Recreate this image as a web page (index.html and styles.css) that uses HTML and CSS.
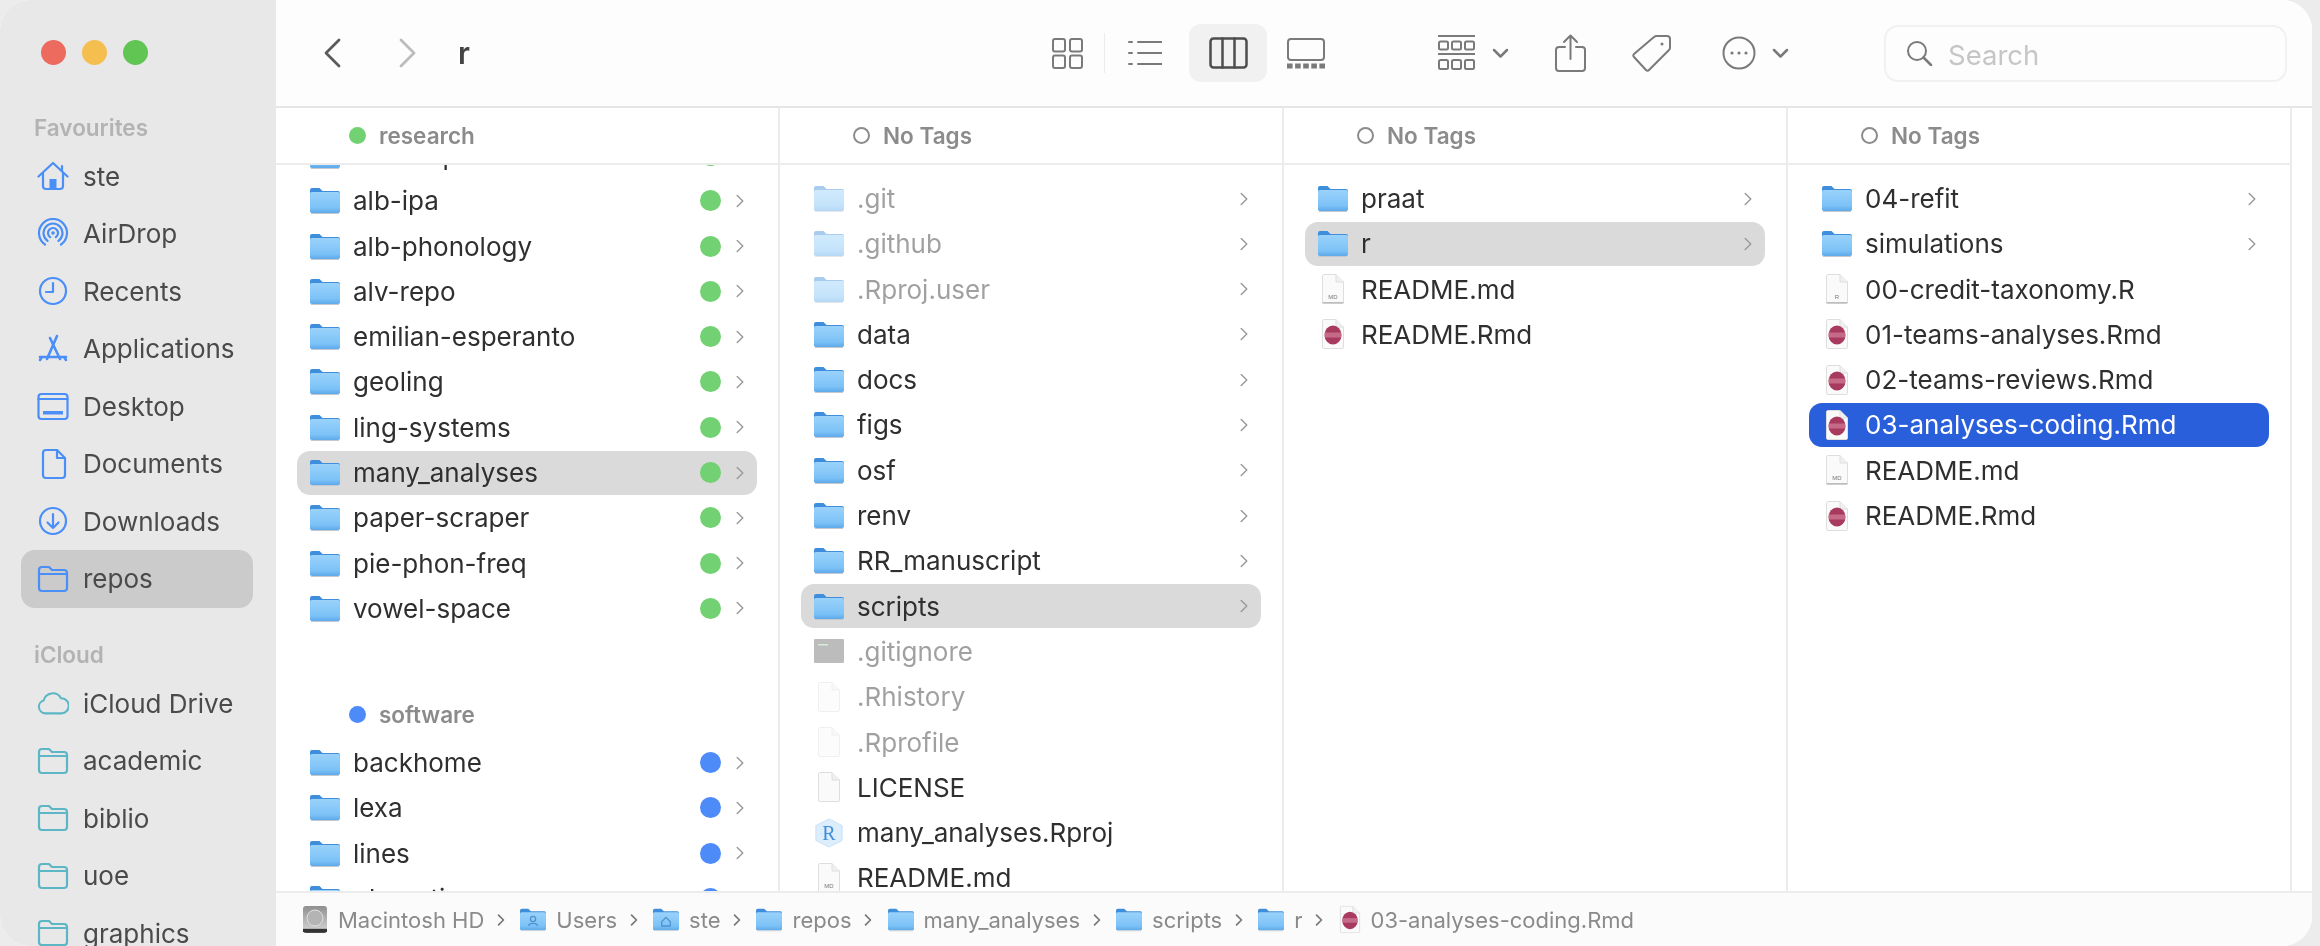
FILE: index.html
```html
<!DOCTYPE html>
<html lang="en">
<head>
    <meta charset="UTF-8">
    <meta name="viewport" content="width=device-width, initial-scale=1.0">
    <title>r</title>
    <link rel="stylesheet" href="styles.css">
</head>
<body>
    <svg class="sprite" aria-hidden="true">
        <defs>
            <linearGradient id="folderBody" x1="0" y1="0" x2="0" y2="1">
                <stop offset="0" stop-color="#9ad2fa"/>
                <stop offset="0.75" stop-color="#7cc2f7"/>
                <stop offset="1" stop-color="#5ea9ea"/>
            </linearGradient>
            <linearGradient id="diskBody" x1="0" y1="0" x2="0" y2="1">
                <stop offset="0" stop-color="#8f8f8f"/>
                <stop offset="0.8" stop-color="#c9c9c9"/>
                <stop offset="1" stop-color="#3d3d3d"/>
            </linearGradient>
        </defs>

        <symbol id="folder" viewBox="0 0 30 27">
            <path d="M0 3a2 2 0 0 1 2-2h7.500l3 3H28a2 2 0 0 1 2 2v6H0Z" fill="#3f8edb"/>
            <rect x="0" y="5" width="30" height="21" rx="1.800" fill="url(#folderBody)"/>
            <rect x="1" y="26" width="28" height="1" fill="#c4c9cf"/>
        </symbol>
        <symbol id="file" viewBox="0 0 24 30">
            <path d="M2.500 .5H15l7.500 7.500V28a1.500 1.500 0 0 1-1.500 1.500H3A1.500 1.500 0 0 1 1.500 28V2A1.500 1.500 0 0 1 2.500 .5Z" fill="#fafafa" stroke="#dedede"/>
            <path d="M15 .5V8h7.500" fill="#f0f0f0" stroke="#dedede"/>
        </symbol>
        <symbol id="file-doc" viewBox="0 0 24 30">
            <use href="#file"/>
            <rect x="1.500" y="28" width="21" height="1.500" fill="#bdbdbd"/>
        </symbol>
        <symbol id="file-rmd" viewBox="0 0 24 30">
            <use href="#file"/>
            <ellipse cx="12" cy="16" rx="8.500" ry="9.500" fill="#a93a5f"/>
            <rect x="3.500" y="13.500" width="17" height="5" fill="#d88aa2" opacity="0.6"/>
        </symbol>
        <symbol id="file-exec" viewBox="0 0 30 24">
            <rect width="30" height="24" rx="1" fill="#6d6d6d"/>
            <rect x="4" y="5" width="10" height="1.500" fill="#9fd69f"/>
        </symbol>
        <symbol id="file-rproj" viewBox="0 0 32 32">
            <path d="M16 1 30 8v16l-14 7-14-7V8Z" fill="#dcedfb" stroke="#c7e0f5"/>
        </symbol>
        <symbol id="disk" viewBox="0 0 26 27">
            <rect x="1" y="0" width="24" height="27" rx="3" fill="url(#diskBody)"/>
            <circle cx="13" cy="12" r="8" fill="#b4b4b4" stroke="#dedede"/>
            <rect x="1" y="23" width="24" height="3" fill="#333"/>
        </symbol>
        <symbol id="folder-user" viewBox="0 0 30 27">
            <use href="#folder"/>
            <circle cx="15" cy="13" r="3" fill="none" stroke="#4f93cf" stroke-width="1.500"/>
            <path d="M10 21c0-4 10-4 10 0" fill="none" stroke="#4f93cf" stroke-width="1.500"/>
        </symbol>
        <symbol id="folder-home" viewBox="0 0 30 27">
            <use href="#folder"/>
            <path d="M10 16l5-5 5 5v5h-10Z" fill="none" stroke="#4f93cf" stroke-width="1.500"/>
        </symbol>

        <symbol id="side-home" viewBox="0 0 32 32">
            <path d="M1.500 16.500 16 3l14.500 13.500M25 6v5M6 13v13a3 3 0 0 0 3 3h14a3 3 0 0 0 3-3V13"/>
            <rect x="12.500" y="19" width="7" height="10" class="solid"/>
        </symbol>
        <symbol id="side-airdrop" viewBox="0 0 32 32">
            <circle cx="16" cy="15" r="1.800" class="solid"/>
            <path d="M13.130 19.100A5 5 0 1 1 18.870 19.100M10.550 22.780A9.500 9.500 0 1 1 21.450 22.780M8 26.500A14 14 0 1 1 24 26.500"/>
        </symbol>
        <symbol id="side-clock" viewBox="0 0 32 32">
            <circle cx="16" cy="16" r="13"/>
            <path d="M16 8v9H9"/>
        </symbol>
        <symbol id="side-apps" viewBox="0 0 32 32">
            <path d="M20 3 10 26M13 5l10 21M3 24h26M5 24l-2 3M27 24l2 3" stroke-width="2.600"/>
        </symbol>
        <symbol id="side-desktop" viewBox="0 0 32 32">
            <rect x="1.500" y="4" width="29" height="25" rx="3"/>
            <path d="M1.500 9h29"/>
            <rect x="6" y="21" width="20" height="3.500" class="solid"/>
        </symbol>
        <symbol id="side-doc" viewBox="0 0 32 32">
            <path d="M9 2h11l8 8v17a3 3 0 0 1-3 3H9a3 3 0 0 1-3-3V5a3 3 0 0 1 3-3Z"/>
            <path d="M20 2v8h8"/>
        </symbol>
        <symbol id="side-down" viewBox="0 0 32 32">
            <circle cx="16" cy="16" r="13"/>
            <path d="M16 9v14M10.500 17.500 16 23l5.500-5.500"/>
        </symbol>
        <symbol id="side-folder" viewBox="0 0 32 32">
            <path d="M2 7a3 3 0 0 1 3-3h7l3 3h12a3 3 0 0 1 3 3v15a3 3 0 0 1-3 3H5a3 3 0 0 1-3-3Z"/>
            <path d="M2 11h28"/>
        </symbol>
        <symbol id="side-cloud" viewBox="0 0 34 32">
            <path d="M9 27a7 7 0 0 1-2-13.700A10 10 0 0 1 25.500 11 8 8 0 0 1 26 27Z"/>
        </symbol>
        <symbol id="chev" viewBox="0 0 12 20">
            <path d="M2.500 3 9.500 10l-7 7"/>
        </symbol>
    </svg>

    <div class="window">
        <aside class="sidebar">
            <div class="lights">
                <span class="light light-red"></span>
                <span class="light light-yellow"></span>
                <span class="light light-green"></span>
            </div>

            <div class="side-label side-label-first">Favourites</div>
            <div class="side-row"><svg class="side-icon"><use href="#side-home"/></svg>ste</div>
            <div class="side-row"><svg class="side-icon"><use href="#side-airdrop"/></svg>AirDrop</div>
            <div class="side-row"><svg class="side-icon"><use href="#side-clock"/></svg>Recents</div>
            <div class="side-row"><svg class="side-icon"><use href="#side-apps"/></svg>Applications</div>
            <div class="side-row"><svg class="side-icon"><use href="#side-desktop"/></svg>Desktop</div>
            <div class="side-row"><svg class="side-icon"><use href="#side-doc"/></svg>Documents</div>
            <div class="side-row"><svg class="side-icon"><use href="#side-down"/></svg>Downloads</div>
            <div class="side-row side-row-active"><svg class="side-icon"><use href="#side-folder"/></svg>repos</div>

            <div class="side-label">iCloud</div>
            <div class="side-row side-teal"><svg class="side-icon"><use href="#side-cloud"/></svg>iCloud Drive</div>
            <div class="side-row side-teal"><svg class="side-icon"><use href="#side-folder"/></svg>academic</div>
            <div class="side-row side-teal"><svg class="side-icon"><use href="#side-folder"/></svg>biblio</div>
            <div class="side-row side-teal"><svg class="side-icon"><use href="#side-folder"/></svg>uoe</div>
            <div class="side-row side-teal"><svg class="side-icon"><use href="#side-folder"/></svg>graphics</div>
        </aside>

        <main class="main">
            <header class="toolbar">
                <div class="tb-left">
                    <svg class="tb-back" viewBox="0 0 19 30"><path d="M16 2 3 15l13 13"/></svg>
                    <svg class="tb-forward" viewBox="0 0 17 30"><path d="M2 2l13 13L2 28"/></svg>
                    <span class="tb-title">r</span>
                </div>

                <div class="tb-btn tb-btn-icons">
                    <svg class="tb-icon" width="31" height="31" viewBox="0 0 31 31">
                        <rect x="1" y="1" width="12" height="12.500" rx="2"/><rect x="18" y="1" width="12" height="12.500" rx="2"/>
                        <rect x="1" y="17.500" width="12" height="12.500" rx="2"/><rect x="18" y="17.500" width="12" height="12.500" rx="2"/>
                    </svg>
                </div>
                <div class="tb-btn tb-btn-list">
                    <svg class="tb-icon" width="34" height="28" viewBox="0 0 34 28">
                        <path d="M10 3h24M10 14h24M10 25h24"/>
                        <path d="M1 3h3M1 14h3M1 25h3"/>
                    </svg>
                </div>
                <div class="tb-btn tb-btn-active">
                    <svg class="tb-icon tb-icon-dark" width="39" height="32" viewBox="0 0 39 32">
                        <rect x="1.500" y="1.500" width="36" height="29" rx="3"/>
                        <path d="M13.500 1.500v29M25.500 1.500v29"/>
                    </svg>
                </div>
                <div class="tb-btn">
                    <svg class="tb-icon" width="38" height="31" viewBox="0 0 38 31">
                        <rect x="1" y="1" width="36" height="21" rx="3"/>
                        <path d="M0 28h38" stroke-width="5" stroke-dasharray="5.600 2.500" stroke-linecap="butt"/>
                    </svg>
                </div>

                <svg class="tb-icon tb-group" width="37" height="36" viewBox="0 0 37 36">
                    <path d="M0 1h37M0 19h37"/>
                    <rect x="1" y="6.500" width="9" height="8" rx="1.500"/><rect x="14" y="6.500" width="9" height="8" rx="1.500"/><rect x="27" y="6.500" width="9" height="8" rx="1.500"/>
                    <rect x="1" y="25" width="9" height="9" rx="1.500"/><rect x="14" y="25" width="9" height="9" rx="1.500"/><rect x="27" y="25" width="9" height="9" rx="1.500"/>
                </svg>
                <svg class="tb-icon tb-caret" width="17" height="11" viewBox="0 0 17 11"><path d="M2 2l6.500 6.500L15 2" stroke-width="2.500"/></svg>
                <svg class="tb-icon tb-share" width="31" height="38" viewBox="0 0 31 38">
                    <path d="M10 13H4a3 3 0 0 0-3 3v18a3 3 0 0 0 3 3h23a3 3 0 0 0 3-3V16a3 3 0 0 0-3-3h-6"/>
                    <path d="M15.500 25V2M9 8l6.500-6.500L22 8"/>
                </svg>
                <svg class="tb-icon tb-tag" width="40" height="38" viewBox="0 0 40 38">
                    <path d="M25 2h10a3 3 0 0 1 3 3v9a3 3 0 0 1-1 2L17 36a2 2 0 0 1-3 0L2 23a2 2 0 0 1 0-3L22 3a4 4 0 0 1 3-1Z"/>
                    <circle cx="30" cy="10" r="1.500" class="solid"/>
                </svg>
                <svg class="tb-icon tb-more" width="34" height="34" viewBox="0 0 34 34">
                    <circle cx="17" cy="17" r="15.500"/>
                    <circle cx="10" cy="17" r="1.600" class="solid"/><circle cx="17" cy="17" r="1.600" class="solid"/><circle cx="24" cy="17" r="1.600" class="solid"/>
                </svg>
                <svg class="tb-icon tb-caret tb-caret-more" width="17" height="11" viewBox="0 0 17 11"><path d="M2 2l6.500 6.500L15 2" stroke-width="2.500"/></svg>

                <div class="search">
                    <svg class="tb-icon" width="27" height="26" viewBox="0 0 27 26">
                        <circle cx="11" cy="11" r="9"/>
                        <path d="M17.500 17.500 25 25" stroke-width="2.500"/>
                    </svg>
                    <span class="search-text">Search</span>
                </div>
            </header>

            <div class="columns">
                <section class="column">
                    <div class="col-head"><span class="tag-dot tag-green"></span><span class="col-name">research</span></div>
                    <div class="col-list col-list-scrolled">
                        <div class="row"><svg class="ico"><use href="#folder"/></svg><span class="name">alb-corpus</span><span class="dot dot-green"></span><svg class="chev"><use href="#chev"/></svg></div>
                        <div class="row"><svg class="ico"><use href="#folder"/></svg><span class="name">alb-ipa</span><span class="dot dot-green"></span><svg class="chev"><use href="#chev"/></svg></div>
                        <div class="row"><svg class="ico"><use href="#folder"/></svg><span class="name">alb-phonology</span><span class="dot dot-green"></span><svg class="chev"><use href="#chev"/></svg></div>
                        <div class="row"><svg class="ico"><use href="#folder"/></svg><span class="name">alv-repo</span><span class="dot dot-green"></span><svg class="chev"><use href="#chev"/></svg></div>
                        <div class="row"><svg class="ico"><use href="#folder"/></svg><span class="name">emilian-esperanto</span><span class="dot dot-green"></span><svg class="chev"><use href="#chev"/></svg></div>
                        <div class="row"><svg class="ico"><use href="#folder"/></svg><span class="name">geoling</span><span class="dot dot-green"></span><svg class="chev"><use href="#chev"/></svg></div>
                        <div class="row"><svg class="ico"><use href="#folder"/></svg><span class="name">ling-systems</span><span class="dot dot-green"></span><svg class="chev"><use href="#chev"/></svg></div>
                        <div class="row row-open"><svg class="ico"><use href="#folder"/></svg><span class="name">many_analyses</span><span class="dot dot-green"></span><svg class="chev"><use href="#chev"/></svg></div>
                        <div class="row"><svg class="ico"><use href="#folder"/></svg><span class="name">paper-scraper</span><span class="dot dot-green"></span><svg class="chev"><use href="#chev"/></svg></div>
                        <div class="row"><svg class="ico"><use href="#folder"/></svg><span class="name">pie-phon-freq</span><span class="dot dot-green"></span><svg class="chev"><use href="#chev"/></svg></div>
                        <div class="row"><svg class="ico"><use href="#folder"/></svg><span class="name">vowel-space</span><span class="dot dot-green"></span><svg class="chev"><use href="#chev"/></svg></div>

                        <div class="group-head"><span class="tag-dot tag-blue"></span><span class="col-name">software</span></div>
                        <div class="row"><svg class="ico"><use href="#folder"/></svg><span class="name">backhome</span><span class="dot dot-blue"></span><svg class="chev"><use href="#chev"/></svg></div>
                        <div class="row"><svg class="ico"><use href="#folder"/></svg><span class="name">lexa</span><span class="dot dot-blue"></span><svg class="chev"><use href="#chev"/></svg></div>
                        <div class="row"><svg class="ico"><use href="#folder"/></svg><span class="name">lines</span><span class="dot dot-blue"></span><svg class="chev"><use href="#chev"/></svg></div>
                        <div class="row"><svg class="ico"><use href="#folder"/></svg><span class="name">phonetics</span><span class="dot dot-blue"></span><svg class="chev"><use href="#chev"/></svg></div>
                    </div>
                </section>

                <section class="column">
                    <div class="col-head"><span class="tag-ring"></span><span class="col-name">No Tags</span></div>
                    <div class="col-list">
                        <div class="row row-hidden"><svg class="ico"><use href="#folder"/></svg><span class="name">.git</span><svg class="chev"><use href="#chev"/></svg></div>
                        <div class="row row-hidden"><svg class="ico"><use href="#folder"/></svg><span class="name">.github</span><svg class="chev"><use href="#chev"/></svg></div>
                        <div class="row row-hidden"><svg class="ico"><use href="#folder"/></svg><span class="name">.Rproj.user</span><svg class="chev"><use href="#chev"/></svg></div>
                        <div class="row"><svg class="ico"><use href="#folder"/></svg><span class="name">data</span><svg class="chev"><use href="#chev"/></svg></div>
                        <div class="row"><svg class="ico"><use href="#folder"/></svg><span class="name">docs</span><svg class="chev"><use href="#chev"/></svg></div>
                        <div class="row"><svg class="ico"><use href="#folder"/></svg><span class="name">figs</span><svg class="chev"><use href="#chev"/></svg></div>
                        <div class="row"><svg class="ico"><use href="#folder"/></svg><span class="name">osf</span><svg class="chev"><use href="#chev"/></svg></div>
                        <div class="row"><svg class="ico"><use href="#folder"/></svg><span class="name">renv</span><svg class="chev"><use href="#chev"/></svg></div>
                        <div class="row"><svg class="ico"><use href="#folder"/></svg><span class="name">RR_manuscript</span><svg class="chev"><use href="#chev"/></svg></div>
                        <div class="row row-open"><svg class="ico"><use href="#folder"/></svg><span class="name">scripts</span><svg class="chev"><use href="#chev"/></svg></div>
                        <div class="row row-hidden"><svg class="ico ico-exec"><use href="#file-exec"/></svg><span class="name">.gitignore</span></div>
                        <div class="row row-hidden"><svg class="ico ico-file"><use href="#file"/></svg><span class="name">.Rhistory</span></div>
                        <div class="row row-hidden"><svg class="ico ico-file"><use href="#file"/></svg><span class="name">.Rprofile</span></div>
                        <div class="row"><svg class="ico ico-file"><use href="#file"/></svg><span class="name">LICENSE</span></div>
                        <div class="row"><span class="ico file-badge"><svg class="file-svg"><use href="#file-rproj"/></svg><b class="badge-r">R</b></span><span class="name">many_analyses.Rproj</span></div>
                        <div class="row"><span class="ico ico-file file-badge"><svg class="file-svg"><use href="#file-doc"/></svg><b class="badge-tiny">MD</b></span><span class="name">README.md</span></div>
                    </div>
                </section>

                <section class="column">
                    <div class="col-head"><span class="tag-ring"></span><span class="col-name">No Tags</span></div>
                    <div class="col-list">
                        <div class="row"><svg class="ico"><use href="#folder"/></svg><span class="name">praat</span><svg class="chev"><use href="#chev"/></svg></div>
                        <div class="row row-open"><svg class="ico"><use href="#folder"/></svg><span class="name">r</span><svg class="chev"><use href="#chev"/></svg></div>
                        <div class="row"><span class="ico ico-file file-badge"><svg class="file-svg"><use href="#file-doc"/></svg><b class="badge-tiny">MD</b></span><span class="name">README.md</span></div>
                        <div class="row"><svg class="ico ico-file"><use href="#file-rmd"/></svg><span class="name">README.Rmd</span></div>
                    </div>
                </section>

                <section class="column">
                    <div class="col-head"><span class="tag-ring"></span><span class="col-name">No Tags</span></div>
                    <div class="col-list">
                        <div class="row"><svg class="ico"><use href="#folder"/></svg><span class="name">04-refit</span><svg class="chev"><use href="#chev"/></svg></div>
                        <div class="row"><svg class="ico"><use href="#folder"/></svg><span class="name">simulations</span><svg class="chev"><use href="#chev"/></svg></div>
                        <div class="row"><span class="ico ico-file file-badge"><svg class="file-svg"><use href="#file-doc"/></svg><b class="badge-tiny">R</b></span><span class="name">00-credit-taxonomy.R</span></div>
                        <div class="row"><svg class="ico ico-file"><use href="#file-rmd"/></svg><span class="name">01-teams-analyses.Rmd</span></div>
                        <div class="row"><svg class="ico ico-file"><use href="#file-rmd"/></svg><span class="name">02-teams-reviews.Rmd</span></div>
                        <div class="row row-selected"><svg class="ico ico-file"><use href="#file-rmd"/></svg><span class="name">03-analyses-coding.Rmd</span></div>
                        <div class="row"><span class="ico ico-file file-badge"><svg class="file-svg"><use href="#file-doc"/></svg><b class="badge-tiny">MD</b></span><span class="name">README.md</span></div>
                        <div class="row"><svg class="ico ico-file"><use href="#file-rmd"/></svg><span class="name">README.Rmd</span></div>
                    </div>
                </section>

                <div class="column-rest"></div>
            </div>

            <footer class="pathbar">
                <div class="crumb"><svg class="crumb-icon"><use href="#disk"/></svg>Macintosh HD</div>
                <svg class="crumb-sep"><use href="#chev"/></svg>
                <div class="crumb"><svg class="crumb-icon"><use href="#folder-user"/></svg>Users</div>
                <svg class="crumb-sep"><use href="#chev"/></svg>
                <div class="crumb"><svg class="crumb-icon"><use href="#folder-home"/></svg>ste</div>
                <svg class="crumb-sep"><use href="#chev"/></svg>
                <div class="crumb"><svg class="crumb-icon"><use href="#folder"/></svg>repos</div>
                <svg class="crumb-sep"><use href="#chev"/></svg>
                <div class="crumb"><svg class="crumb-icon"><use href="#folder"/></svg>many_analyses</div>
                <svg class="crumb-sep"><use href="#chev"/></svg>
                <div class="crumb"><svg class="crumb-icon"><use href="#folder"/></svg>scripts</div>
                <svg class="crumb-sep"><use href="#chev"/></svg>
                <div class="crumb"><svg class="crumb-icon"><use href="#folder"/></svg>r</div>
                <svg class="crumb-sep"><use href="#chev"/></svg>
                <div class="crumb"><svg class="crumb-icon crumb-file"><use href="#file-rmd"/></svg>03-analyses-coding.Rmd</div>
            </footer>
        </main>
    </div>
</body>
</html>
```
FILE: styles.css
```css
* {
    box-sizing: border-box;
}

body {
    margin: 0;
    height: 946px;
    overflow: hidden;
    background-color: #ececec;
    font-family: Inter, "Liberation Sans", sans-serif;
}

.sprite {
    position: absolute;
    width: 0;
    height: 0;
}

.window {
    display: flex;
    width: 2312px;
    height: 946px;
    border-radius: 30px;
    overflow: hidden;
    background-color: #ffffff;
    filter: blur(0.7px);
}

/* sidebar */

.sidebar {
    width: 276px;
    flex: none;
    padding: 40px 23px 0 21px;
    background-color: #e8e8e8;
    overflow: hidden;
}

.lights {
    display: flex;
    gap: 16px;
    height: 25px;
    padding-left: 20px;
}

.light {
    width: 25px;
    height: 25px;
    border-radius: 50%;
}

.light-red {
    background-color: #ec6a5e;
}

.light-yellow {
    background-color: #f4bf4f;
}

.light-green {
    background-color: #61c554;
}

.side-label {
    height: 40px;
    margin-top: 27px;
    padding-left: 13px;
    font-size: 22.500px;
    font-weight: 600;
    line-height: 40px;
    color: #b3b3b3;
}

.side-label-first {
    height: 39.500px;
    margin-top: 43px;
}

.side-row {
    display: flex;
    align-items: center;
    gap: 14px;
    height: 57.500px;
    padding-left: 16px;
    border-radius: 14px;
    font-size: 26px;
    color: #4a4a4a;
    --side-color: #4a8ef8;
}

.side-row-active {
    background-color: #cbcbcb;
}

.side-teal {
    --side-color: #5cb6c6;
}

.side-icon {
    width: 32px;
    height: 32px;
    fill: none;
    color: var(--side-color);
    stroke: var(--side-color);
    stroke-width: 2.2;
    stroke-linecap: round;
    stroke-linejoin: round;
}

.solid {
    fill: currentColor;
    stroke: none;
}

/* toolbar */

.main {
    flex: 1;
    min-width: 0;
    display: flex;
    flex-direction: column;
}

.toolbar {
    display: flex;
    align-items: center;
    flex: none;
    height: 108px;
    background-color: #fdfdfd;
    border-bottom: 2px solid #e6e6e6;
    color: #7a7a7a;
}

.tb-left {
    display: flex;
    align-items: center;
    width: 754px;
    padding-left: 47px;
}

.tb-back,
.tb-forward {
    height: 30px;
    fill: none;
    stroke-width: 2.800;
    stroke-linecap: round;
    stroke-linejoin: round;
}

.tb-back {
    width: 19px;
    stroke: #5a5a5a;
}

.tb-forward {
    width: 17px;
    margin-left: 57px;
    stroke: #bcbcbc;
}

.tb-title {
    margin-left: 42px;
    font-size: 30px;
    font-weight: 600;
    color: #444444;
}

.tb-icon {
    flex: none;
    fill: none;
    stroke: #7a7a7a;
    stroke-width: 2;
    stroke-linecap: round;
    stroke-linejoin: round;
}

.tb-icon-dark {
    stroke: #4d4d4d;
    stroke-width: 2.500;
}

.tb-btn {
    display: flex;
    align-items: center;
    justify-content: center;
    width: 78px;
    height: 58px;
    border-radius: 12px;
}

.tb-btn-icons {
    width: 75px;
    border-radius: 0;
    position: relative;
}

.tb-btn-icons::after {
    content: "";
    position: absolute;
    right: 0;
    top: 9px;
    height: 40px;
    border-right: 1px solid #ececec;
}

.tb-btn-list {
    width: 80px;
    margin-right: 4px;
}

.tb-btn-active {
    background-color: #f1f1f1;
}

.tb-group {
    margin-left: 93px;
}

.tb-caret {
    margin-left: 17px;
}

.tb-share {
    margin-left: 46px;
}

.tb-tag {
    margin-left: 46px;
}

.tb-more {
    margin-left: 50px;
}

.tb-caret-more {
    margin-left: 16px;
}

.search {
    display: flex;
    align-items: center;
    gap: 15px;
    width: 403px;
    height: 57px;
    margin-left: 95px;
    padding-left: 20px;
    border: 2px solid #f1f1f1;
    border-radius: 14px;
    background-color: #fdfdfd;
}

.search-text {
    margin-top: 4px;
    font-size: 27.500px;
    color: #c6c6c6;
}

/* columns */

.columns {
    flex: 1;
    min-height: 0;
    display: flex;
}

.column {
    display: flex;
    flex-direction: column;
    width: 504px;
    flex: none;
    border-right: 2px solid #ececec;
}

.column-rest {
    flex: 1;
}

.col-head {
    display: flex;
    align-items: center;
    flex: none;
    height: 57px;
    padding-left: 73px;
    padding-bottom: 1px;
    border-bottom: 2px solid #ececec;
}

.col-name {
    font-size: 22.500px;
    font-weight: 600;
    color: #8b8b8b;
}

.tag-dot {
    width: 17px;
    height: 17px;
    margin-right: 13px;
    border-radius: 50%;
}

.tag-green {
    background-color: #72d172;
}

.tag-blue {
    background-color: #4d8bf8;
}

.tag-ring {
    width: 17px;
    height: 17px;
    margin-right: 13px;
    border: 2px solid #8c8c8c;
    border-radius: 50%;
}

.col-list {
    flex: 1;
    min-height: 0;
    display: flex;
    flex-direction: column;
    gap: 1.300px;
    padding: 11.500px 21px 0;
    overflow: hidden;
}

/* first row is scrolled under the column header */
.col-list-scrolled {
    padding-top: 0;
}

.col-list-scrolled > .row:first-child {
    margin-top: -31.500px;
}

.group-head {
    display: flex;
    align-items: center;
    flex: none;
    height: 44px;
    margin-top: 61px;
    margin-bottom: 2.500px;
    padding-left: 52px;
}

.row {
    display: flex;
    align-items: center;
    flex: none;
    height: 44px;
    padding: 0 12px 0 13px;
    border-radius: 13px;
    font-size: 26px;
    color: #2f2f2f;
}

.row-open {
    background-color: #dadada;
}

.row-selected {
    background-color: #2a5fdc;
    color: #ffffff;
}

.row-hidden .ico,
.row-hidden .name {
    opacity: 0.45;
}

.ico {
    flex: none;
    width: 30px;
    height: 27px;
    margin-right: 13px;
}

.ico-file {
    width: 24px;
    height: 30px;
    margin-left: 3px;
    margin-right: 16px;
}

.ico-exec {
    height: 24px;
}

.file-badge {
    position: relative;
    display: block;
    height: 30px;
}

.file-svg {
    display: block;
    width: 100%;
    height: 100%;
}

.badge-tiny {
    position: absolute;
    left: 0;
    right: 0;
    bottom: 3px;
    font-family: "Liberation Sans", sans-serif;
    font-size: 6px;
    font-weight: normal;
    line-height: 7px;
    text-align: center;
    color: #777777;
}

.badge-r {
    position: absolute;
    left: 0;
    right: 0;
    top: 5px;
    font-family: "Liberation Serif", serif;
    font-size: 20px;
    font-weight: normal;
    line-height: 20px;
    text-align: center;
    color: #3f8edb;
}

.name {
    flex: 1;
    min-width: 0;
    white-space: nowrap;
}

.dot {
    flex: none;
    width: 21px;
    height: 21px;
    margin-right: 14px;
    border-radius: 50%;
}

.dot-green {
    background-color: #72d172;
}

.dot-blue {
    background-color: #4d8bf8;
}

.chev {
    flex: none;
    width: 10px;
    height: 16px;
    fill: none;
    stroke: #9a9a9a;
    stroke-width: 1.800;
    stroke-linecap: round;
    stroke-linejoin: round;
}

/* path bar */

.pathbar {
    display: flex;
    align-items: center;
    flex: none;
    height: 55px;
    padding-left: 26px;
    background-color: #fbfbfb;
    border-top: 2px solid #ececec;
    font-size: 22px;
    color: #8a8a8a;
}

.crumb {
    display: flex;
    align-items: center;
    gap: 10px;
    white-space: nowrap;
}

.crumb-icon {
    width: 26px;
    height: 27px;
}

.crumb-file {
    width: 22px;
    height: 29px;
}

.crumb-sep {
    flex: none;
    width: 10px;
    height: 14px;
    margin: 0 14.500px 0 11.500px;
    fill: none;
    stroke: #777777;
    stroke-width: 2.400;
    stroke-linecap: round;
    stroke-linejoin: round;
}
```
